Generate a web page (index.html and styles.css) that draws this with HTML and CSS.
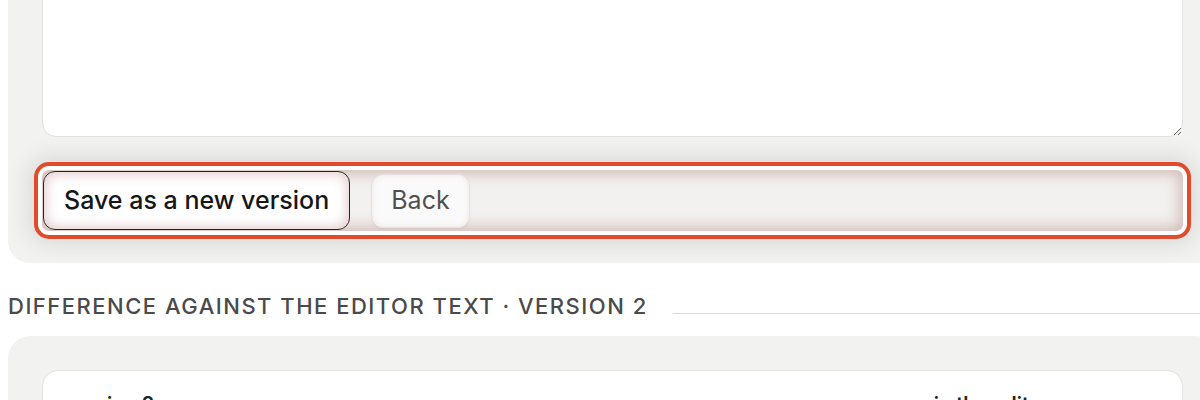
FILE: index.html
```html
<!DOCTYPE html>
<html lang="en">
<head>
<meta charset="utf-8">
<title>Edit version</title>
<link rel="stylesheet" href="styles.css">
</head>
<body>
<div class="page">
  <section class="card editor-card">
    <textarea class="editor" aria-label="Editor text"></textarea>
    <div class="actions">
      <button class="btn btn-primary" type="button">Save as a new version</button>
      <button class="btn btn-secondary" type="button">Back</button>
    </div>
  </section>

  <div class="section-head">
    <h2 class="section-title">Difference against the editor text · Version 2</h2>
    <div class="rule"></div>
  </div>

  <section class="card diff-card">
    <div class="diff-box">
      <div class="diff-head">
        <span class="diff-col">version 2</span>
        <span class="diff-col">in the editor</span>
      </div>
    </div>
  </section>
</div>
</body>
</html>
```

FILE: styles.css
```css
html, body {
  overflow: hidden;
}
body {
  margin: 0;
  background: #ffffff;
  font-family: Inter, "Noto Sans", sans-serif;
  color: #1d1d1d;
}
.page {
  width: 1209px;
  padding-left: 8px;
  margin-top: -100px;
}
.card {
  background: #f2f2f0;
  border-radius: 22px;
  padding: 34px 34px 32px;
}
.editor {
  display: block;
  width: 100%;
  height: 203px;
  box-sizing: border-box;
  margin: 0;
  background: #ffffff;
  border: 1px solid #e2e1de;
  border-radius: 14px;
  resize: vertical;
  font: inherit;
  outline: none;
}
.actions {
  margin-top: 33px;
  height: 61px;
  display: flex;
  align-items: center;
  gap: 21px;
  padding-left: 1px;
  border-radius: 7px;
  background: #f2f1ef;
  box-shadow:
    inset 0 0 14px 4px rgba(175, 125, 120, 0.45),
    0 0 0 4px #ffffff,
    0 0 0 8px #e04b2e,
    0 0 24px 12px rgba(0, 0, 0, 0.11);
}
.btn {
  font-family: Inter, "Noto Sans", sans-serif;
  font-size: 25px;
  line-height: 1;
  border-radius: 12px;
  padding: 0 20px;
  cursor: pointer;
}
.btn-primary {
  height: 59px;
  background: #ffffff;
  border: 1px solid #2a2323;
  color: #161616;
  font-weight: 500;
  box-shadow: inset 0 0 12px 2px rgba(190, 140, 135, 0.45);
}
.btn-secondary {
  height: 54px;
  background: #fbfafa;
  border: 1px solid #e5e1e0;
  color: #505050;
  font-weight: 400;
  padding: 0 19px;
  box-shadow: 0 1px 2px rgba(0, 0, 0, 0.05), inset 0 0 6px rgba(200, 170, 170, 0.25);
}
.section-head {
  display: flex;
  gap: 25px;
  margin: 28px 0 15px;
}
.section-title {
  margin: 0;
  font-size: 22px;
  line-height: 30px;
  font-weight: 500;
  letter-spacing: 1.5px;
  text-transform: uppercase;
  color: #4a4a4a;
  white-space: nowrap;
}
.rule {
  flex: 1;
  height: 1px;
  background: #d9d9d6;
  align-self: flex-end;
  margin-bottom: 7px;
}
.diff-box {
  background: #ffffff;
  border: 1px solid #e2e1de;
  border-radius: 16px;
  min-height: 120px;
}
.diff-head {
  display: flex;
  justify-content: space-between;
  padding: 19px 133px 0 22px;
  font-size: 20px;
  line-height: 28px;
  font-weight: 600;
  color: #222;
}
```
